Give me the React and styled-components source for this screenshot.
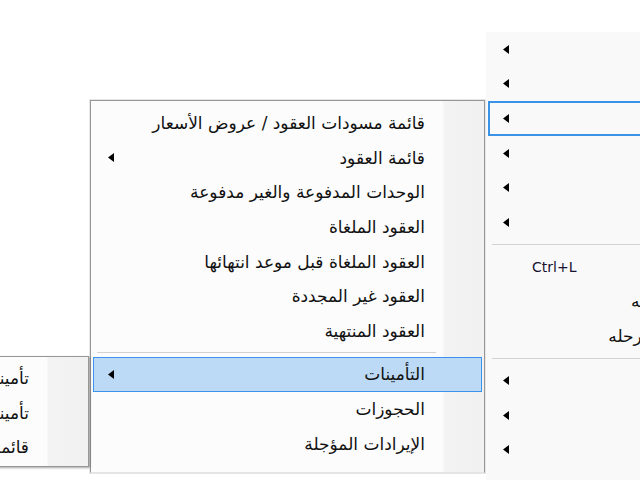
import React from 'react'
import styled, { createGlobalStyle } from 'styled-components'

const GlobalStyle = createGlobalStyle`
  html, body {
    margin: 0;
    background: #ffffff;
  }
`

const Desktop = styled.div`
  position: relative;
  width: 640px;
  height: 480px;
  overflow: hidden;
  background: #ffffff;
  font-family: "DejaVu Sans", "Noto Sans", sans-serif;
  font-size: 14px;
  color: #111111;
`

const MainMenu = styled.div`
  position: absolute;
  left: 486px;
  top: 32px;
  width: 278px;
  height: 460px;
  box-sizing: border-box;
  background: #f9f9f9;
  direction: rtl;
  z-index: 1;
`

const ContractsMenu = styled.div`
  position: absolute;
  left: 90px;
  top: 100px;
  width: 395px;
  height: 373px;
  box-sizing: border-box;
  padding-top: 5px;
  border: 1px solid #979797;
  border-bottom-color: #e4e4e4;
  background: linear-gradient(to left, #f1f1f1 0, #f3f3f3 40px, #fcfcfc 41px, #fcfcfc 100%);
  box-shadow: 0 0 0 1px #e6e6e6;
  direction: rtl;
  z-index: 2;
`

const InsuranceMenu = styled.div`
  position: absolute;
  left: -200px;
  top: 356px;
  width: 289px;
  height: 111px;
  box-sizing: border-box;
  padding-top: 4px;
  border: 1px solid #979797;
  background: linear-gradient(to left, #f1f1f1 0, #f3f3f3 40px, #fcfcfc 41px, #fcfcfc 100%);
  box-shadow: 1px 1px 2px rgba(0, 0, 0, 0.35);
  direction: rtl;
  z-index: 3;
`

const Row = styled.div`
  display: grid;
  grid-template-columns: 1fr auto 29px;
  align-items: center;
  height: 34.6px;
  box-sizing: border-box;
  margin: 0 2px;
  padding: 0 ${p => p.$padRight}px 0 ${p => p.$padLeft}px;
  border: ${p => p.$focus ? 2 : 1}px solid ${p => (p.$active || p.$focus) ? '#3a93e6' : 'transparent'};
  background: ${p => p.$active ? '#bcdaf5' : 'transparent'};
  white-space: nowrap;
`

const Label = styled.span`
  text-align: right;
  font-size: 17px;
`

const Shortcut = styled.span`
  direction: ltr;
  text-align: left;
  color: #141430;
`

const ArrowSlot = styled.span`
  display: flex;
  justify-content: flex-end;
  align-items: center;
`

const Separator = styled.div`
  height: ${p => p.$h}px;
  display: flex;
  align-items: center;
  margin: 0 ${p => p.$inset}px 0 ${p => p.$start}px;

  &::after {
    content: '';
    flex: 1;
    height: 1px;
    background: #d2d2d2;
  }
`

const Arrow = () => (
  <svg width="6" height="9" viewBox="0 0 6 9">
    <polygon points="6,0 6,9 0,4.5" fill="#000" />
  </svg>
)

const mainItems = [
  { label: 'العملاء', sub: true },
  { label: 'الملفات', sub: true },
  { label: 'العقود', sub: true, focus: true },
  { label: 'الملاك', sub: true },
  { label: 'الخدمات', sub: true },
  { label: 'الأدوات', sub: true },
  'sep',
  { label: 'بحث', key: 'Ctrl+L' },
  { label: 'سداد دفعه' },
  { label: 'إغلاق المرحله' },
  'sep',
  { label: 'البنوك', sub: true },
  { label: 'الصيانة', sub: true },
  { label: 'النظام', sub: true },
]

const contractItems = [
  { label: 'قائمة مسودات العقود / عروض الأسعار' },
  { label: 'قائمة العقود', sub: true },
  { label: 'الوحدات المدفوعة والغير مدفوعة' },
  { label: 'العقود الملغاة' },
  { label: 'العقود الملغاة قبل موعد انتهائها' },
  { label: 'العقود غير المجددة' },
  { label: 'العقود المنتهية' },
  'sep',
  { label: 'التأمينات', sub: true, active: true },
  { label: 'الحجوزات' },
  { label: 'الإيرادات المؤجلة' },
]

const insuranceItems = [
  { label: 'تأمينات الوحدات المؤجرة' },
  { label: 'تأمينات العقود المنتهية' },
  { label: 'قائمة التأمينات المستردة' },
]

function MenuRows({ items, padRight, padLeft, sep }) {
  return items.map((it, i) =>
    it === 'sep' ? (
      <Separator key={i} {...sep} />
    ) : (
      <Row
        key={i}
        $padRight={padRight - (it.focus ? 1 : 0)}
        $padLeft={padLeft - (it.focus ? 1 : 0)}
        $active={it.active}
        $focus={it.focus}
      >
        <Label>{it.label}</Label>
        <Shortcut>{it.key}</Shortcut>
        <ArrowSlot>{it.sub && <Arrow />}</ArrowSlot>
      </Row>
    )
  )
}

export default function App() {
  return (
    <Desktop>
      <GlobalStyle />
      <MainMenu>
        <MenuRows items={mainItems} padRight={56} padLeft={14} sep={{ $h: 10, $inset: 0, $start: 6 }} />
      </MainMenu>
      <ContractsMenu>
        <MenuRows items={contractItems} padRight={56} padLeft={14} sep={{ $h: 9, $inset: 48, $start: 6 }} />
      </ContractsMenu>
      <InsuranceMenu>
        <MenuRows items={insuranceItems} padRight={56} padLeft={14} sep={{ $h: 9, $inset: 48, $start: 6 }} />
      </InsuranceMenu>
    </Desktop>
  )
}
